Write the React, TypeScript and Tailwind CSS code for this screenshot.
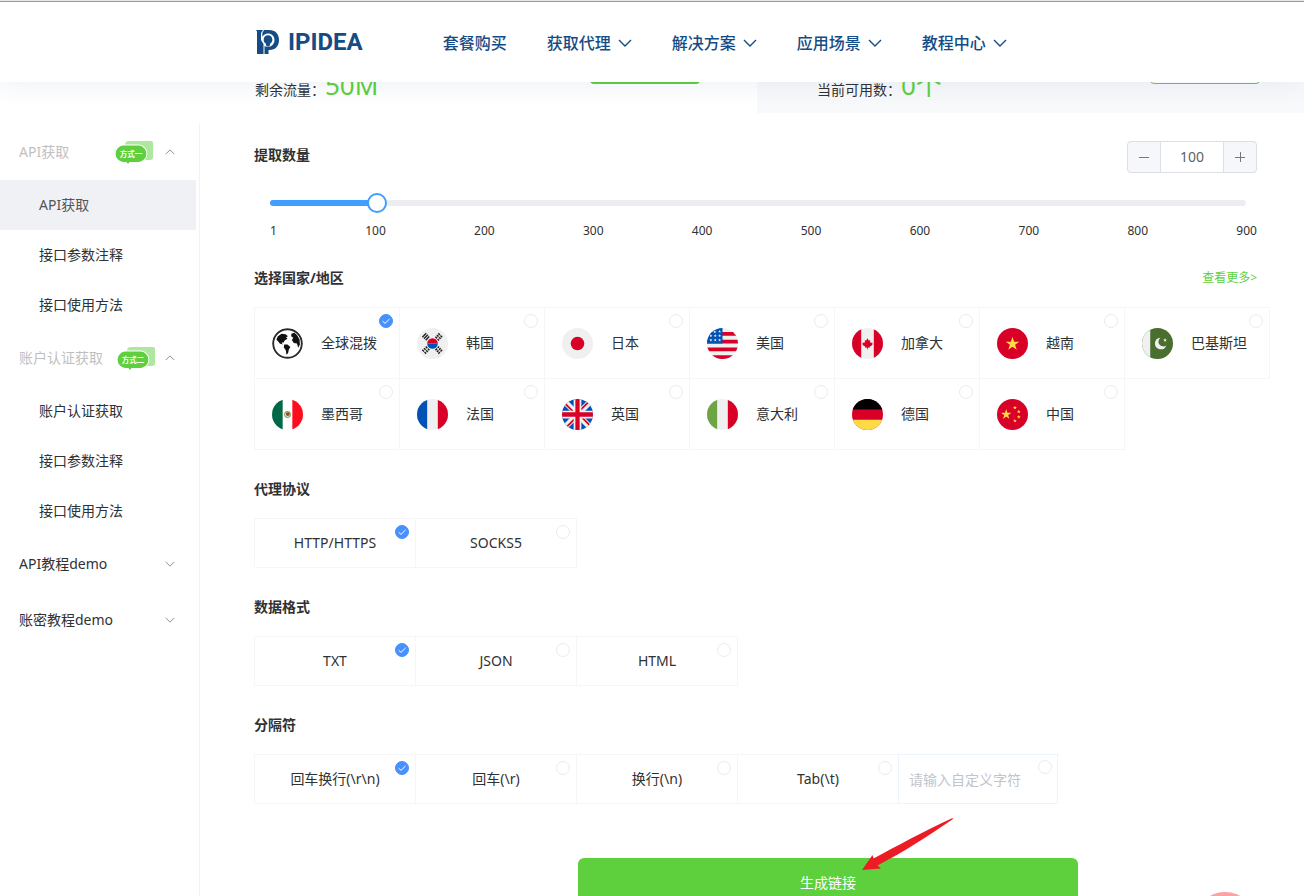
import { useState, type ReactNode } from "react";

const STAR = "M0 -1 L.225 -.309 L.951 -.309 L.363 .118 L.588 .809 L0 .382 L-.588 .809 L-.363 .118 L-.951 -.309 L-.225 -.309 Z";

const navItems = [
  { name: "套餐购买", more: false },
  { name: "获取代理", more: true },
  { name: "解决方案", more: true },
  { name: "应用场景", more: true },
  { name: "教程中心", more: true },
];

const sideGroups = [
  { title: "API获取", badge: "方式一", open: true, items: ["API获取", "接口参数注释", "接口使用方法"] },
  { title: "账户认证获取", badge: "方式二", open: true, items: ["账户认证获取", "接口参数注释", "接口使用方法"] },
  { title: "API教程demo", badge: "", open: false, items: [] },
  { title: "账密教程demo", badge: "", open: false, items: [] },
];

const flags: Record<string, ReactNode> = {
  全球混拨: (
    <>
      <circle cx="16" cy="16" r="14.8" fill="#fff" stroke="#2b2b2b" strokeWidth="2" />
      <path d="M4.5 12 L6 8.5 L10 6 L14 6.5 L16.5 8.5 L14.5 9.5 L16 11 L13 13 L12 15 L10 15 L11 17 L8 16 L6 13.5 Z" fill="#111" />
      <path d="M12.5 17 L16 17 L19 19.5 L17.5 22 L16.5 26 L15 27.5 L14.2 23 L12.2 20 Z" fill="#111" />
      <path d="M20 6 L23 4.8 L26 7.5 L28.5 12 L28.8 17 L27 20.5 L25.8 16 L22.5 15.5 L20.5 12.5 L22 10 L19.8 8.5 Z" fill="#111" />
    </>
  ),
  韩国: (
    <>
      <rect width="32" height="32" fill="#f0f0f0" />
      <path d="M10.5 16 a5.5 5.5 0 0 1 11 0 Z" fill="#d80027" />
      <path d="M10.5 16 a5.5 5.5 0 0 0 11 0 Z" fill="#0052b4" />
      <g stroke="#222" strokeWidth="1.5">
        <path d="M5.5 9.5 l4 -4 M7.2 11 l4 -4 M9 12.6 l3.6 -3.8" />
        <path d="M22 5.5 l4 4 M20.5 7.2 l4 4 M19 9 l3.8 3.8" strokeDasharray="2.4 .8" />
        <path d="M5.5 22.5 l4 4 M7.2 20.8 l4 4 M9 19.2 l3.8 3.8" strokeDasharray="2.4 .8" />
        <path d="M22 26.5 l4 -4 M20.5 24.8 l4 -4 M19 23 l3.8 -3.8" strokeDasharray="2.4 .8" />
      </g>
    </>
  ),
  日本: (
    <>
      <rect width="32" height="32" fill="#f0f0f0" />
      <circle cx="16" cy="16" r="7" fill="#d80027" />
    </>
  ),
  美国: (
    <>
      <rect width="32" height="32" fill="#f0f0f0" />
      <path d="M0 4 h32 v4 H0z M0 12 h32 v4 H0z M0 20 h32 v4 H0z M0 28 h32 v4 H0z" fill="#d80027" />
      <rect width="16" height="16" fill="#0052b4" />
      {[[8, 4], [13, 3.5], [4, 8], [8.5, 8], [13, 8], [4, 12.5], [8.5, 12.5], [13, 12.5]].map(([x, y]) => (
        <path key={`${x}-${y}`} d={STAR} transform={`translate(${x} ${y}) scale(1.7)`} fill="#f0f0f0" />
      ))}
    </>
  ),
  加拿大: (
    <>
      <rect width="32" height="32" fill="#f0f0f0" />
      <path d="M0 0 h9.5 v32 H0z M22.5 0 H32 v32 h-9.5z" fill="#d80027" />
      <path d="M16 10.5 l1.5 2.6 1.4 -.6 -.5 3 1.3 -1 .4 .9 1.4 -.2 -.8 1.7 .7 .5 -3.2 2 .2 1 -2 -.2 V22 h-.8 v-1.8 l-2 .2 .2 -1 -3.2 -2 .7 -.5 -.8 -1.7 1.4 .2 .4 -.9 1.3 1 -.5 -3 1.4 .6 Z" fill="#d80027" />
    </>
  ),
  越南: (
    <>
      <rect width="32" height="32" fill="#d80027" />
      <path d={STAR} transform="translate(16 16.4) scale(7.4)" fill="#ffda44" />
    </>
  ),
  巴基斯坦: (
    <>
      <rect width="32" height="32" fill="#496e2d" />
      <rect width="8.5" height="32" fill="#f0f0f0" />
      <path d="M19 10 a6 6 0 1 0 6 8 a5 5 0 1 1 -6 -8 Z" fill="#f0f0f0" />
      <path d={STAR} transform="translate(23.8 12.5) scale(2.2)" fill="#f0f0f0" />
    </>
  ),
  墨西哥: (
    <>
      <rect width="32" height="32" fill="#fff" />
      <rect width="11" height="32" fill="#006847" />
      <rect x="21" width="11" height="32" fill="#ff0d1c" />
      <circle cx="16" cy="16" r="2.9" fill="none" stroke="#8fa05a" strokeWidth="1.2" />
      <circle cx="16.3" cy="15.6" r="2" fill="#8c4a1f" />
    </>
  ),
  法国: (
    <>
      <rect width="32" height="32" fill="#f0f0f0" />
      <rect width="10.5" height="32" fill="#0052b4" />
      <rect x="21.5" width="10.5" height="32" fill="#d80027" />
    </>
  ),
  英国: (
    <>
      <rect width="32" height="32" fill="#0052b4" />
      <path d="M2 2 L30 30 M30 2 L2 30" stroke="#f0f0f0" strokeWidth="6" />
      <path d="M3 4.6 L13 14.6 M29 27.4 L19 17.4 M27.4 3 L17.4 13 M4.6 29 L14.6 19" stroke="#d80027" strokeWidth="1.8" />
      <path d="M16 0 V32 M0 16 H32" stroke="#f0f0f0" strokeWidth="8" />
      <path d="M16 0 V32 M0 16 H32" stroke="#d80027" strokeWidth="4.4" />
    </>
  ),
  意大利: (
    <>
      <rect width="32" height="32" fill="#f0f0f0" />
      <rect width="10.5" height="32" fill="#6da544" />
      <rect x="21.5" width="10.5" height="32" fill="#d80027" />
    </>
  ),
  德国: (
    <>
      <rect width="32" height="32" fill="#d80027" />
      <rect width="32" height="10.8" fill="#000" />
      <rect y="21.4" width="32" height="10.6" fill="#ffda44" />
    </>
  ),
  中国: (
    <>
      <rect width="32" height="32" fill="#d80027" />
      <path d={STAR} transform="translate(9.5 16) scale(5.6)" fill="#ffda44" />
      {[[18.5, 9], [22.5, 13], [22.5, 18.5], [18.5, 22.5]].map(([x, y]) => (
        <path key={y} d={STAR} transform={`translate(${x} ${y}) scale(2.2)`} fill="#ffda44" />
      ))}
    </>
  ),
};

const marks = [1, 100, 200, 300, 400, 500, 600, 700, 800, 900];

function Chevron({ up = false, className = "" }: { up?: boolean; className?: string }) {
  return (
    <svg viewBox="0 0 14 8" fill="none" stroke="currentColor" className={className} aria-hidden="true">
      <path d={up ? "M1 7 L7 1 L13 7" : "M1 1 L7 7 L13 1"} strokeWidth="1.4" />
    </svg>
  );
}

function Logo() {
  return (
    <a href="#" className="flex items-center gap-2 text-[#154c85]">
      <svg viewBox="0 0 24 24" className="h-6 w-6" aria-hidden="true">
        <path d="M0 0 H7 L5 3 V10 L7.5 14 V24 H1 V1.5 Z" fill="currentColor" />
        <path d="M8 0 H13 C19.5 0 23 4 23 10 C23 16 19.5 20 13.5 20 H12.5 V24 H8.5 V16 C13 18.5 18.5 15.5 18.5 10 C18.5 6 15.5 3.5 12 3.5 C9.5 3.5 7.5 4.8 6.3 6.7 V3 Z" fill="currentColor" />
        <path d="M12 5.3 a4.4 4.4 0 0 1 2.3 8.1 L13.4 16.5 H10.6 L9.7 13.4 A4.4 4.4 0 0 1 12 5.3 Z" fill="currentColor" />
      </svg>
      <span className="font-[Roboto] text-2xl font-bold">IPIDEA</span>
    </a>
  );
}

function Badge({ text }: { text: string }) {
  return (
    <svg viewBox="0 0 38 23" className="h-[23px] w-[38px]" role="img" aria-label={text}>
      <path d="M10 4 Q10 0 14 0 H36 Q38 0 38 2 V16 Q38 19 35 19 H10 Z" fill="#aee89e" />
      <path d="M8 4.5 H24 a8.3 8.3 0 0 1 0 16.5 H14.5 L13 23 L11.5 21 H8 a8.3 8.3 0 0 1 0 -16.5 Z" fill="#5ed03e" stroke="#fff" strokeWidth="2" paintOrder="stroke" />
      <text x="16" y="15.5" textAnchor="middle" fontSize="7.5" fontWeight="700" fill="#fff">{text}</text>
    </svg>
  );
}

function Radio({ name, checked, onChange, label }: { name: string; checked: boolean; onChange: () => void; label?: string }) {
  return (
    <span className="absolute top-1.5 right-1.5 flex size-3.5">
      <input
        type="radio"
        name={name}
        checked={checked}
        onChange={onChange}
        aria-label={label}
        className="size-3.5 appearance-none rounded-full border border-[#ebebf0] checked:border-[#4690ff] checked:bg-[#4690ff]"
      />
      {checked && (
        <svg viewBox="0 0 14 14" className="pointer-events-none absolute inset-0" fill="none" stroke="#fff" aria-hidden="true">
          <path d="M3.6 7.2 L6 9.4 L10.6 4.9" />
        </svg>
      )}
    </span>
  );
}

function OptionGroup({ title, name, options, children }: { title: string; name: string; options: string[]; children?: (value: string, set: (v: string) => void) => ReactNode }) {
  const [value, setValue] = useState(options[0]);

  return (
    <section className="mt-[29px]">
      <h2 className="text-sm font-bold">{title}</h2>
      <div className="mt-[19px] flex flex-wrap">
        {options.map((option) => (
          <label key={option} className="relative -mr-px flex h-[50px] w-[162px] items-center justify-center border border-[#f5f5fa] text-sm">
            {option}
            <Radio name={name} checked={value === option} onChange={() => setValue(option)} />
          </label>
        ))}
        {children?.(value, setValue)}
      </div>
    </section>
  );
}

function Sidebar() {
  return (
    <aside className="mt-[11px] w-[200px] shrink-0 border-r border-[#f2f2f5]">
      <nav className="w-[196px] text-sm">
        {sideGroups.map((group, g) => (
          <div key={group.title}>
            <button type="button" className={`flex h-14 w-full items-center pr-[21px] pl-[19px] ${group.open ? "text-[#bfbfbf]" : "text-[#303133]"}`}>
              <span className="grow text-left">{group.title}</span>
              {group.badge && <span className={g === 0 ? "mr-3" : "mr-2.5"}><Badge text={group.badge} /></span>}
              <Chevron up={group.open} className="h-1.5 w-2.5 text-[#909399]" />
            </button>
            {group.items.map((item, i) => (
              <a key={item} href="#" className={`flex h-[50px] items-center pl-[39px] ${g === 0 && i === 0 ? "bg-[#f0f1f5] text-[#555]" : "text-[#303133]"}`}>
                {item}
              </a>
            ))}
          </div>
        ))}
      </nav>
    </aside>
  );
}

// Scrolled up under the header, so only the lower part of this row shows.
function Summary() {
  return (
    <div className="flex h-[31px]">
      <div className="flex w-[757px] items-end pr-[57px] pl-[255px]">
        <p className="grow pb-[7px] text-sm leading-8">
          剩余流量：<span className="text-[26px] text-[#5ed03e]">50M</span>
        </p>
        <button type="button" aria-label="购买流量" className="mb-[29px] h-9 w-[110px] shrink-0 rounded bg-[#5ed03e]" />
      </div>
      <div className="flex grow items-end bg-[#f8f9fb] pr-11 pl-[60px]">
        <p className="grow pb-[7px] text-sm leading-8">
          当前可用数：<span className="text-[26px] text-[#5ed03e]">0个</span>
        </p>
        <button type="button" aria-label="添加" className="mb-[29px] h-9 w-[110px] shrink-0 rounded border border-[#5ed03e] bg-white" />
      </div>
    </div>
  );
}

function Amount() {
  const [count, setCount] = useState(100);
  const percent = ((count - 1) / 899) * 100;

  function update(next: number) {
    setCount(Math.min(900, Math.max(1, next || 1)));
  }

  return (
    <section>
      <div className="flex items-start justify-between pr-3.5">
        <h2 className="text-sm leading-7 font-bold">提取数量</h2>
        <div className="flex h-8 w-[130px] overflow-hidden rounded border border-[#dcdfe6] bg-[#f5f7fa] text-[#606266]">
          <button type="button" aria-label="减少" onClick={() => update(count - 1)} className="flex w-8 items-center justify-center">
            <svg viewBox="0 0 10 10" className="size-2.5" stroke="#777"><path d="M0 5.5 H10" /></svg>
          </button>
          <input
            aria-label="提取数量"
            value={count}
            onChange={(e) => update(Number(e.target.value))}
            className="min-w-0 flex-1 border-x border-[#dcdfe6] bg-white text-center text-sm outline-none"
          />
          <button type="button" aria-label="增加" onClick={() => update(count + 1)} className="flex w-8 items-center justify-center">
            <svg viewBox="0 0 10 10" className="size-2.5" stroke="#777"><path d="M0 5.5 H10 M5.5 0 V10" /></svg>
          </button>
        </div>
      </div>
      <div className="relative mt-5 mr-[25px] ml-4 flex h-5 items-center">
        <div className="h-1.5 w-full rounded-full bg-[#ebedf2]">
          <div className="h-1.5 rounded-full bg-[#409eff]" style={{ width: `${percent}%` }} />
        </div>
        <span className="absolute size-5 -translate-x-1/2 rounded-full border-2 border-[#409eff] bg-white" style={{ left: `${percent}%` }} />
        <input
          type="range"
          aria-label="提取数量"
          min={1}
          max={900}
          value={count}
          onChange={(e) => update(Number(e.target.value))}
          className="absolute inset-0 w-full cursor-pointer opacity-0"
        />
      </div>
      <div className="mt-2 flex justify-between pr-3.5 pl-4 text-xs leading-5">
        {marks.map((mark) => (
          <span key={mark}>{mark}</span>
        ))}
      </div>
    </section>
  );
}

function Countries() {
  const [country, setCountry] = useState("全球混拨");

  return (
    <section className="mt-[27px] pb-px">
      <div className="flex items-center justify-between pr-3.5">
        <h2 className="text-sm font-bold">选择国家/地区</h2>
        <a href="#" className="text-xs text-[#5ed03e]">查看更多&gt;</a>
      </div>
      <div className="mt-[19px] flex flex-wrap">
        {Object.keys(flags).map((name) => (
          <label key={name} className="relative -mr-px -mb-px flex h-[72px] w-[146px] items-center border border-[#f5f5fa] pl-[17px] text-sm">
            <svg viewBox="0 0 32 32" className="mr-[18px] size-[31px] rounded-full" aria-hidden="true">{flags[name]}</svg>
            {name}
            <Radio name="country" checked={country === name} onChange={() => setCountry(name)} />
          </label>
        ))}
      </div>
    </section>
  );
}

export default function App() {
  const [custom, setCustom] = useState("");

  return (
    <div className="flex h-screen flex-col overflow-hidden bg-white font-['Noto_Sans','Noto_Sans_CJK_SC',sans-serif] text-[#303133]">
      <header className="relative z-10 flex h-[82px] shrink-0 items-center border-t border-[#e8e8e8] bg-white pl-64 shadow-[0_2px_24px_rgba(32,80,130,0.09)]">
        <div className="absolute inset-x-0 top-0 h-px bg-[#999]" />
        <Logo />
        <nav className="mt-0.5 ml-20 flex items-center gap-10">
          {navItems.map((item) => (
            <a key={item.name} href="#" className="flex items-center gap-[7px] font-medium whitespace-nowrap text-[#154c85]">
              {item.name}
              {item.more && <Chevron className="h-2 w-3.5" />}
            </a>
          ))}
        </nav>
      </header>
      <Summary />
      <div className="flex grow">
        <Sidebar />
        <main className="min-w-0 flex-1 pt-7 pr-[33px] pl-[54px]">
          <Amount />
          <Countries />
          <OptionGroup title="代理协议" name="protocol" options={["HTTP/HTTPS", "SOCKS5"]} />
          <OptionGroup title="数据格式" name="format" options={["TXT", "JSON", "HTML"]} />
          <OptionGroup title="分隔符" name="separator" options={["回车换行(\\r\\n)", "回车(\\r)", "换行(\\n)", "Tab(\\t)"]}>
            {(value, set) => (
              <div className="relative w-40">
                <input
                  aria-label="自定义字符"
                  placeholder="请输入自定义字符"
                  value={custom}
                  onChange={(e) => setCustom(e.target.value)}
                  className="h-[50px] w-full border border-[#ecf5ff] px-2.5 text-sm outline-none placeholder:text-[#c0c4cc]"
                />
                <Radio name="separator" label="自定义" checked={value === "custom"} onChange={() => set("custom")} />
              </div>
            )}
          </OptionGroup>
          <div className="relative mt-[54px] ml-[324px] w-[500px]">
            <button type="button" className="h-[50px] w-full rounded-md bg-[#5ed03e] text-sm text-white">
              生成链接
            </button>
            <svg viewBox="0 0 92 54" className="pointer-events-none absolute -top-[41px] left-[284px] h-[54px] w-[92px]" aria-hidden="true">
              <path d="M0 53 L10.5 38 L11.5 41.5 C35 29 60 15 90.5 1 L91 2 C65 20 43 34 15.5 48.5 L19 51.5 Z" fill="#ed1c24" />
            </svg>
          </div>
        </main>
      </div>
      <button type="button" aria-label="在线客服" className="fixed right-12 -bottom-[58px] size-[62px] rounded-full bg-[#fba3a3]" />
    </div>
  );
}
